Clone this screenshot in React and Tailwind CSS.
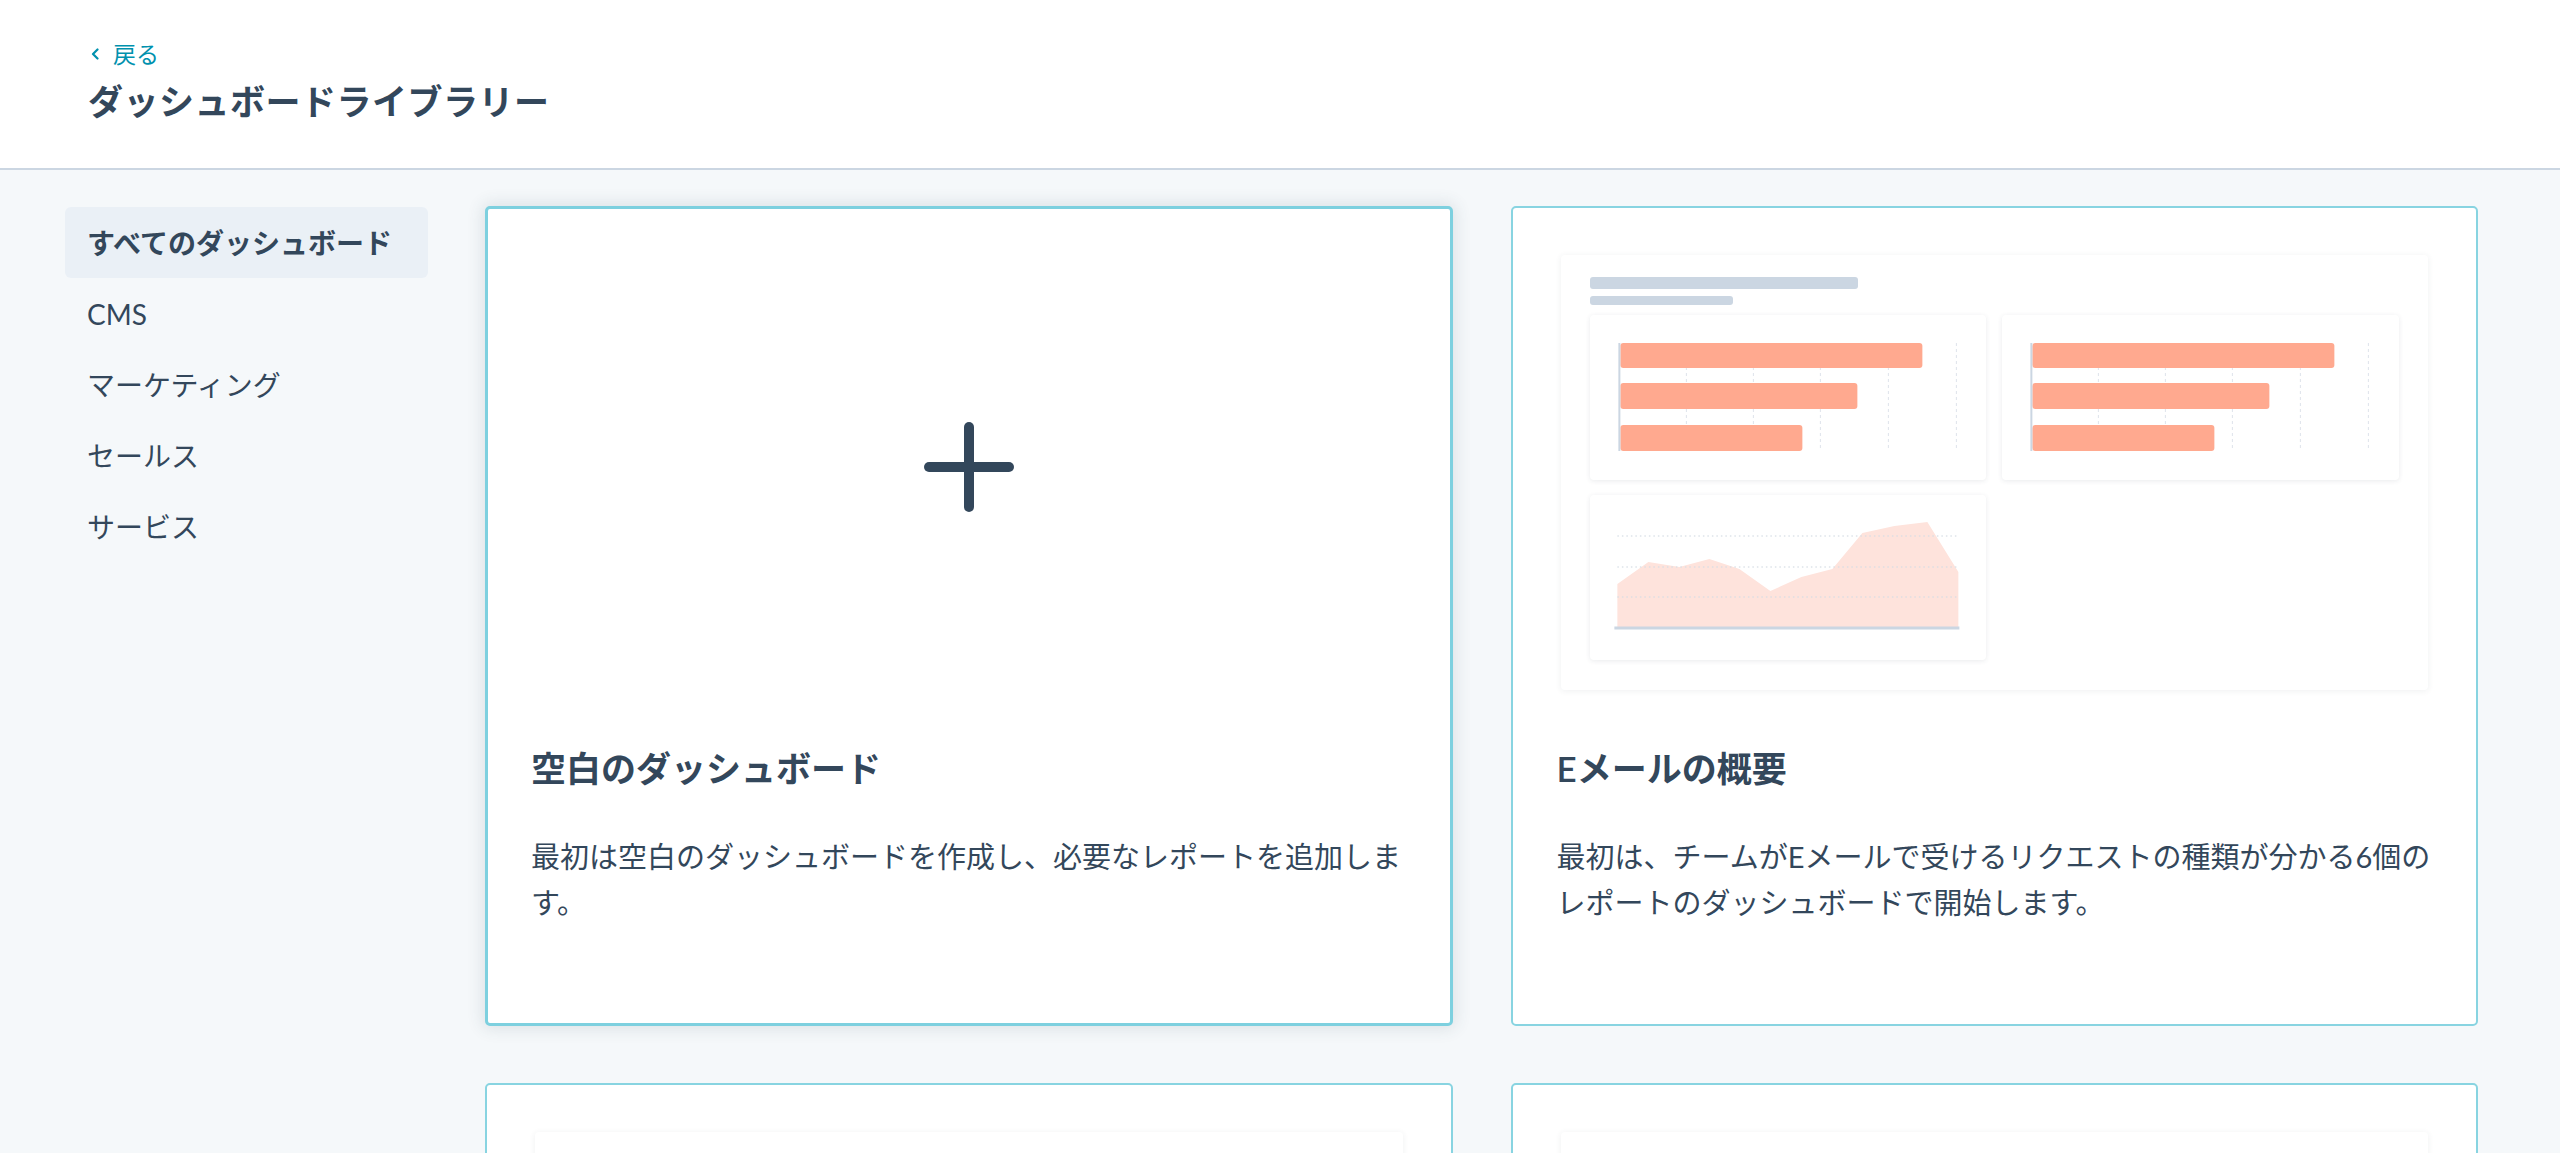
import { useState } from 'react'

const navItems = ['すべてのダッシュボード', 'CMS', 'マーケティング', 'セールス', 'サービス']

const BarChart = () => (
    <svg viewBox="0 0 396 165" className="w-full h-full">
        {[96, 163, 230, 298, 366].map(x => (
            <line key={x} x1={x} y1="28" x2={x} y2="136" stroke="#dfe3eb" strokeWidth="1" strokeDasharray="3 3" />
        ))}
        <rect x="30" y="28" width="302" height="25" rx="3" fill="#ffa98f" />
        <rect x="30" y="68" width="237" height="26" rx="3" fill="#ffa98f" />
        <rect x="30" y="110" width="182" height="26" rx="3" fill="#ffa98f" />
        <line x1="29" y1="28" x2="29" y2="136" stroke="#cbd6e2" strokeWidth="2" />
    </svg>
)

const AreaChart = () => (
    <svg viewBox="0 0 396 165" className="w-full h-full">
        <polygon
            points="27,89 58,67 89,72 119,64 149,74 180,96 211,82 242,74 272,38 304,31 337,27 368,77 368,133 27,133"
            fill="#fee3dc"
        />
        {[41, 72, 102].map(y => (
            <line key={y} x1="27" y1={y} x2="368" y2={y} stroke="#d6dce4" strokeOpacity="0.8" strokeWidth="1.5" strokeDasharray="1.5 3" />
        ))}
        <line x1="24" y1="133" x2="369" y2="133" stroke="#cbd6e2" strokeWidth="3" />
    </svg>
)

const MiniCard = ({ children }) => (
    <div className="h-[165px] bg-white rounded-[4px] shadow-[0_1px_5px_rgba(45,62,80,0.1)]">
        {children}
    </div>
)

const PreviewPanel = () => (
    <div className="h-[435px] mx-[4px] bg-white rounded-[4px] shadow-[0_1px_6px_rgba(45,62,80,0.08)] px-[29px] pt-[22px]">
        <div className="w-[268px] h-[12px] rounded-[3px] bg-[#cbd6e2]" />
        <div className="w-[143px] h-[9px] rounded-[3px] bg-[#cbd6e2] mt-[7px]" />
        <div className="grid grid-cols-2 gap-x-[16px] gap-y-[15px] mt-[10px]">
            <MiniCard><BarChart /></MiniCard>
            <MiniCard><BarChart /></MiniCard>
            <MiniCard><AreaChart /></MiniCard>
        </div>
    </div>
)

const PlusIcon = () => (
    <svg width="90" height="90" viewBox="0 0 90 90" fill="none">
        <line x1="45" y1="5" x2="45" y2="85" stroke="#33475b" strokeWidth="10" strokeLinecap="round" />
        <line x1="5" y1="45" x2="85" y2="45" stroke="#33475b" strokeWidth="10" strokeLinecap="round" />
    </svg>
)

const TemplateCard = ({ title, description, preview, active }) => (
    <div
        className={`h-[820px] bg-white rounded-[5px] flex flex-col ${active
            ? 'border-[3px] border-[#7dd0df] px-[43px] pt-[46px] shadow-[0_0_16px_3px_rgba(51,71,91,0.12)]'
            : 'border-2 border-[#88d4e1] px-[44px] pt-[47px]'
            }`}
    >
        {preview}
        <h3 className="mt-[54px] text-[35px] leading-[48px] font-semibold text-[#33475b]">{title}</h3>
        <p className="mt-[42px] text-[29px] leading-[46px] text-[#33475b]">{description}</p>
    </div>
)

const App = () => {
    const [selected, setSelected] = useState(0)

    return (
        <div className="min-h-screen bg-[#f5f8fa] font-['Lato','Noto_Sans_CJK_JP',sans-serif] text-[#33475b]">
            {/* Header */}
            <header className="bg-white border-b-2 border-[#cbd6e2] h-[170px] pl-[88px] pt-[38px]">
                <a href="#" className="flex items-center gap-[13px] text-[23px] leading-[32px] text-[#0091ae]">
                    <svg width="9" height="12" viewBox="0 0 9 12" fill="none" className="ml-[3px]">
                        <polyline points="6.5,1.5 2,6 6.5,10.5" stroke="#0091ae" strokeWidth="2.2" strokeLinecap="round" strokeLinejoin="round" />
                    </svg>
                    戻る
                </a>
                <h1 className="mt-[7px] text-[35px] leading-[48px] font-semibold tracking-[0.5px]">ダッシュボードライブラリー</h1>
            </header>

            <div className="flex pl-[65px] pr-[82px] pt-[36px] pb-[60px] gap-[57px]">
                {/* Sidebar */}
                <nav className="w-[363px] shrink-0 flex flex-col pt-[1px]">
                    {navItems.map((item, i) => (
                        <button
                            key={item}
                            onClick={() => setSelected(i)}
                            className={`h-[71px] px-[22px] text-left text-[28px] rounded-[6px] ${selected === i ? 'bg-[#eaf0f6] font-semibold' : ''}`}
                        >
                            {item}
                        </button>
                    ))}
                </nav>

                {/* Cards */}
                <div className="flex-1 grid grid-cols-2 gap-x-[58px] gap-y-[57px]">
                    <TemplateCard
                        active
                        title="空白のダッシュボード"
                        description="最初は空白のダッシュボードを作成し、必要なレポートを追加します。"
                        preview={
                            <div className="h-[435px] flex items-center justify-center pb-[12px]">
                                <PlusIcon />
                            </div>
                        }
                    />
                    <TemplateCard
                        title="Eメールの概要"
                        description="最初は、チームがEメールで受けるリクエストの種類が分かる6個のレポートのダッシュボードで開始します。"
                        preview={<PreviewPanel />}
                    />
                    <TemplateCard
                        title="マーケティングの概要"
                        description="最初は、マーケティング活動の成果が分かるレポートのダッシュボードで開始します。"
                        preview={<PreviewPanel />}
                    />
                    <TemplateCard
                        title="セールスの概要"
                        description="最初は、セールスチームの成果が分かるレポートのダッシュボードで開始します。"
                        preview={<PreviewPanel />}
                    />
                </div>
            </div>
        </div>
    )
}

export default App
